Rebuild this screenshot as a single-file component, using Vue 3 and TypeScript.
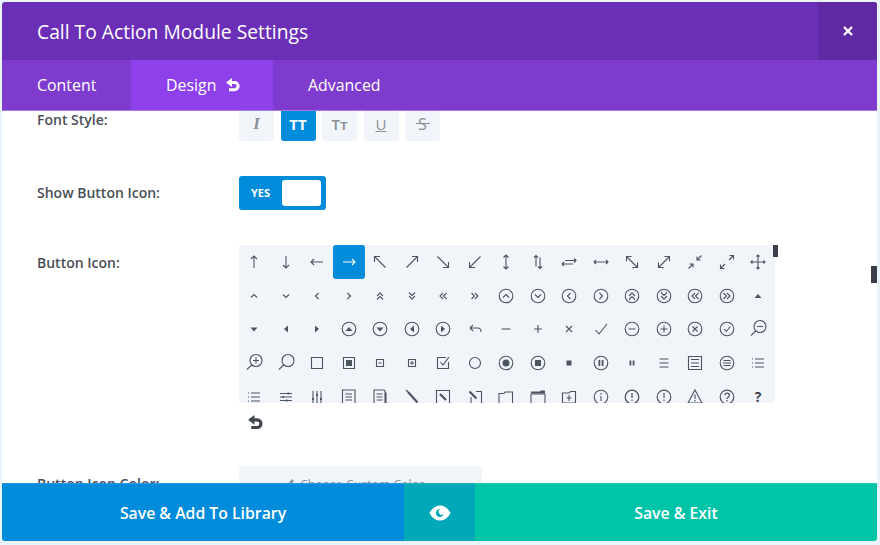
<script setup lang="ts">
interface Glyph { s?: string; f?: string; t?: string; w?: number; b?: string }

const ring = 'M18.8 12a6.8 6.8 0 1 1-13.6 0 6.8 6.8 0 1 1 13.6 0'
const triU = 'M8.5 14 12 10l3.5 4z'
const triD = 'M8.5 10.5 12 14.5l3.5-4z'
const triL = 'M14 8.5 10 12l4 3.5z'
const triR = 'M10 8.5 14 12l-4 3.5z'
const chevU = 'M9 13.5l3-3 3 3'
const chevD = 'M9 10.5l3 3 3-3'
const chevL = 'M13.5 9l-3 3 3 3'
const chevR = 'M10.5 9l3 3-3 3'
const dblU = 'M9 12l3-3 3 3M9 15.5l3-3 3 3'
const dblD = 'M9 8.5l3 3 3-3M9 12l3 3 3-3'
const dblL = 'M12 9l-3 3 3 3M15.5 9l-3 3 3 3'
const dblR = 'M8.5 9l3 3-3 3M12 9l3 3-3 3'
const lens = 'M20 9.5a6 6 0 1 1-12 0 6 6 0 1 1 12 0M9.7 13.8 5 18.5'
const lines3 = 'M8 8.5h8M8 12h8M8 15.5h8'
const listDots = 'M9 8h9M9 12h9M9 16h9M6 8h1M6 12h1M6 16h1'

const icons: Glyph[] = [
  { s: 'M12 6v12M9 9l3-3 3 3' },
  { s: 'M12 6v12M9 15l3 3 3-3' },
  { s: 'M6 12h12M9 9l-3 3 3 3' },
  { s: 'M6 12h12M15 9l3 3-3 3' },
  { s: 'M6.500 6.500l11 11M6.500 12V6.500H12' },
  { s: 'M17.500 6.500l-11 11M12 6.500h5.500V12' },
  { s: 'M6.500 6.500l11 11M12 17.500h5.500V12' },
  { s: 'M17.500 6.500l-11 11M12 17.500H6.500V12' },
  { s: 'M12 5v14M9.500 7.500 12 5l2.500 2.500M9.500 16.500 12 19l2.500-2.500' },
  { s: 'M10 5.500v11M8 7.500l2-2 2 2M14 7.500v11M12 16.500l2 2 2-2' },
  { s: 'M5 14h11M7 12l-2 2 2 2M8 10.500h11M17 8.500l2 2-2 2' },
  { s: 'M5 12h14M7 10l-2 2 2 2M17 10l2 2-2 2' },
  { s: 'M6.500 6.500l11 11M6.500 11.500v-5h5M17.500 12.500v5h-5' },
  { s: 'M17.500 6.500l-11 11M12.500 6.500h5v5M6.500 12.500v5h5' },
  { s: 'M18.500 5.500 14 10M14 6.500V10h3.500M5.500 18.500 10 14M6.500 14H10v3.500' },
  { s: 'M14 10l4.500-4.500M14.500 5.500h4v4M10 14l-4.500 4.500M5.500 14.500v4h4' },
  { s: 'M12 5v14M5 12h14M10.500 6.500 12 5l1.500 1.500M10.500 17.500 12 19l1.500-1.500M6.500 10.500 5 12l1.500 1.500M17.500 10.500 19 12l-1.500 1.500' },

  { s: chevU }, { s: chevD }, { s: chevL }, { s: chevR },
  { s: dblU }, { s: dblD }, { s: dblL }, { s: dblR },
  { s: ring + chevU }, { s: ring + chevD }, { s: ring + chevL }, { s: ring + chevR },
  { s: ring + dblU }, { s: ring + dblD }, { s: ring + dblL }, { s: ring + dblR },
  { f: triU },

  { f: triD }, { f: triL }, { f: triR },
  { s: ring, f: triU }, { s: ring, f: triD }, { s: ring, f: triL }, { s: ring, f: triR },
  { s: 'M7 11h8c2 0 3 1.500 3 4M10 8l-3 3 3 3' },
  { s: 'M7.500 12h9' },
  { s: 'M12 8v8M8 12h8' },
  { s: 'M9 9l6 6M15 9l-6 6' },
  { s: 'M6.500 13l3.500 4 8-10' },
  { s: ring + 'M8.500 12h7' },
  { s: ring + 'M8.500 12h7M12 8.500v7' },
  { s: ring + 'M9.500 9.500l5 5M14.500 9.500l-5 5' },
  { s: ring + 'M9 12l2.300 2.500L15.500 9.500' },
  { s: lens + 'M11 9.500h6' },

  { s: lens + 'M11 9.500h6M14 6.500v6' },
  { s: lens },
  { s: 'M6.500 6.500h11v11h-11z' },
  { s: 'M6.500 6.500h11v11h-11z', f: 'M9 9h6v6H9z' },
  { s: 'M8.500 8.500h7v7h-7zM10.500 12h3' },
  { s: 'M8.500 8.500h7v7h-7zM10 12h4M12 10v4' },
  { s: 'M17.500 11v6.500h-11v-11H15M9.500 11l2.500 3 6-8' },
  { s: 'M17.500 12a5.500 5.500 0 1 1-11 0 5.500 5.500 0 1 1 11 0' },
  { s: ring, f: 'M15.500 12a3.500 3.500 0 1 1-7 0 3.500 3.500 0 1 1 7 0' },
  { s: ring, f: 'M9 9h6v6H9z' },
  { f: 'M9.500 9.500h5v5h-5z' },
  { s: ring, f: 'M9.500 9h1.800v6H9.500zM12.700 9h1.800v6h-1.800z' },
  { f: 'M9.500 9.500h1.800v5H9.500zM12.700 9.500h1.800v5h-1.800z' },
  { s: 'M7.500 8h9M7.500 12h9M7.500 16h9' },
  { s: 'M5.500 5.500h13v13h-13z' + lines3 },
  { s: ring + 'M8.500 9.500h7M8 12h8M8.500 14.500h7' },
  { s: listDots },

  { s: listDots },
  { s: 'M6 8.500h12M6 12h12M6 15.500h12', f: 'M13.500 7.500h1.500v2h-1.500zM8.500 11h1.500v2H8.500zM12 14.500h1.500v2H12z' },
  { s: 'M8 6v12M12 6v12M16 6v12', f: 'M7 13h2v2H7zM11 9h2v2h-2zM15 13h2v2h-2z' },
  { s: 'M5.500 5h12.500v15H5.500zM8.500 9h6.500M8.500 12h6.500M8.500 15h6.500' },
  { s: 'M16 5H6v15h11V6zM8.500 9h6M8.500 12h6M8.500 15h6M18 7.500V21H9' },
  { s: 'M6 5l2 2', b: 'M8 7l9.500 10.500' },
  { s: 'M5.500 5.500h13v13h-13z', b: 'M9 9l6 6' },
  { s: 'M13 6.500h5.500v12.500H8V12', b: 'M6.500 6.500l7 7' },
  { s: 'M5 8.500h5l1-1.500h7.500v11.500H5z' },
  { s: 'M5 9h14v9.500H5z', f: 'M5 6.500h9l.5-1H19v3H5z' },
  { s: 'M5.500 8h6.500l1.500-1.500h5v11.500h-13zM12 10v6M9.500 13h5' },
  { s: ring + 'M12 11v5M12 8v1.500' },
  { s: ring + 'M12 8v5M12 14.500V16', w: 1.300 },
  { s: ring + 'M12 8v5M12 14.500V16', w: 1.200 },
  { s: 'M12 5 19 18H5zM12 9.500V14M12 15v1.500', w: 1.100 },
  { s: ring + 'M9.800 10.300c0-3 4.600-3 4.600 0 0 2-2.400 1.900-2.400 3.800M12 15v1.500', w: 1.200 },
  { t: '?' },
]

const fontStyles = [
  { label: 'I', cls: 'italic' },
  { label: 'TT', cls: 'on' },
  { label: 'Tт', cls: 'caps' },
  { label: 'U', cls: 'under' },
  { label: 'S', cls: 'strike' },
]
</script>

<template>
  <div class="modal">
    <header class="head">
      <h1 class="title">Call To Action Module Settings</h1>
      <button class="close" aria-label="Close">
        <svg width="12" height="12" viewBox="0 0 12 12"><path d="M2 2l8 8M10 2l-8 8" stroke="#fff" stroke-width="2.400" fill="none" /></svg>
      </button>
    </header>

    <nav class="tabs">
      <div class="tab first">Content</div>
      <div class="tab active">
        Design
        <svg class="undo" width="16" height="16" viewBox="0 0 16 16"><path d="M5 5.500h4.500a3.600 3.600 0 0 1 0 7.200H4" stroke="currentColor" stroke-width="3" fill="none" /><path d="M7 1v9L1 5.500z" fill="currentColor" /></svg>
      </div>
      <div class="tab">Advanced</div>
    </nav>

    <main class="body">
      <div class="row first-row">
        <label class="lab">Font Style:</label>
        <div class="styles">
          <span v-for="b in fontStyles" :key="b.label" class="style-btn" :class="b.cls">{{ b.label }}</span>
        </div>
      </div>

      <div class="row toggle-row">
        <label class="lab">Show Button Icon:</label>
        <div class="toggle"><span class="yes">YES</span><span class="thumb"></span></div>
      </div>

      <div class="row icon-row">
        <label class="lab">Button Icon:</label>
        <div class="icon-col">
          <div class="grid-wrap">
            <div class="grid">
              <div v-for="(g, i) in icons" :key="i" class="cell" :class="{ sel: i === 3 }">
                <svg width="24" height="24" viewBox="0 0 24 24">
                  <path v-if="g.s" :d="g.s" fill="none" stroke="currentColor" :stroke-width="g.w || 1.100" />
                  <path v-if="g.b" :d="g.b" fill="none" stroke="currentColor" stroke-width="2.200" />
                  <path v-if="g.f" :d="g.f" fill="currentColor" />
                  <text v-if="g.t" x="12" y="17" text-anchor="middle" class="q">{{ g.t }}</text>
                </svg>
              </div>
            </div>
            <span class="thumb-inner"></span>
          </div>
          <svg class="undo-dark" width="17" height="17" viewBox="0 0 16 16"><path d="M5 5.500h4.500a3.600 3.600 0 0 1 0 7.200H4" stroke="currentColor" stroke-width="3" fill="none" /><path d="M7 1v9L1 5.500z" fill="currentColor" /></svg>
        </div>
      </div>

      <div class="row color-row">
        <label class="lab">Button Icon Color:</label>
        <div class="color-btn">
          <svg width="10" height="12" viewBox="0 0 10 12"><path d="M7 1 9 3 3 10H1V8z" fill="currentColor" /></svg>
          Choose Custom Color
        </div>
      </div>

      <span class="thumb-outer"></span>
    </main>

    <footer class="foot">
      <div class="fbtn lib">Save &amp; Add To Library</div>
      <div class="fbtn eye">
        <svg width="22" height="16" viewBox="0 0 22 16"><path fill-rule="evenodd" d="M0.500 8C3 3 7 .5 11 .5S19 3 21.500 8C19 13 15 15.500 11 15.500S3 13 .5 8zM11 4a4 4 0 1 0 3.800 5.200A3 3 0 0 1 11 4z" fill="#fff" /></svg>
      </div>
      <div class="fbtn exit">Save &amp; Exit</div>
    </footer>
  </div>
</template>

<style>
html, body { margin: 0; background: #e9f5fb; }
</style>

<style scoped>
* { box-sizing: border-box; }
.modal {
  width: 875px;
  height: 539px;
  margin: 2px 3px 4px 2px;
  display: flex;
  flex-direction: column;
  border-radius: 3px;
  overflow: hidden;
  background: #fff;
  font-family: "Open Sans", "Noto Sans", sans-serif;
}
.head {
  height: 58px;
  flex: none;
  display: flex;
  align-items: center;
  justify-content: space-between;
  background: #6b2eb6;
}
.title {
  margin: 0 0 0 35px;
  font-size: 19.300px;
  font-weight: 400;
  color: #fff;
}
.close {
  width: 59px;
  height: 58px;
  border: 0;
  padding: 0;
  background: #5f29a3;
  display: flex;
  align-items: center;
  justify-content: center;
}
.tabs {
  height: 51px;
  flex: none;
  display: flex;
  background: #7e3bce;
  border-bottom: 1px solid #a67be0;
  color: #fff;
  font-size: 15.900px;
}
.tab {
  display: flex;
  align-items: center;
  padding: 0 35px;
}
.tab.first { width: 129px; }
.tab.active {
  width: 142px;
  background: #8e41ea;
  gap: 9px;
}
.undo { flex: none; }
.body {
  flex: 1;
  min-height: 0;
  overflow: hidden;
  position: relative;
  color: #4c5866;
}
.row {
  display: flex;
  padding-left: 35px;
}
.lab {
  width: 202px;
  flex: none;
  font-size: 14px;
  font-weight: 600;
  color: #4a4f57;
}
.first-row { height: 30px; }
.first-row .lab { line-height: 18px; }
.styles { display: flex; gap: 6.500px; }
.style-btn {
  position: relative;
  width: 35px;
  height: 30px;
  border-radius: 0 0 3px 3px;
  background: #f1f5f9;
  color: #87909a;
  display: flex;
  align-items: center;
  justify-content: center;
  font-size: 15px;
  font-weight: 600;
  padding-bottom: 4px;
}
.style-btn.on { background: #008bdb; color: #fff; font-size: 15px; font-weight: 700; }
.style-btn.italic { font-style: italic; font-family: "Liberation Serif", serif; font-size: 17px; font-weight: 700; }
.style-btn.under { text-decoration: underline; font-weight: 400; }
.style-btn.strike { font-weight: 400; font-size: 16px; }
.style-btn.strike::after {
  content: "";
  position: absolute;
  left: 11px;
  top: 12px;
  width: 14px;
  height: 1px;
  background: #87909a;
}
.toggle-row { margin-top: 35px; }
.toggle-row .lab { line-height: 34px; }
.toggle {
  width: 87px;
  height: 34px;
  border-radius: 3px;
  background: #008bdb;
  padding: 4px 5px 4px 12px;
  display: flex;
  align-items: center;
  justify-content: space-between;
}
.yes { color: #fff; font-size: 11px; font-weight: 700; padding-bottom: 2px; }
.thumb { width: 39px; height: 26px; background: #fff; border-radius: 3px; }
.icon-row { margin-top: 35px; }
.icon-row .lab { line-height: 36px; }
.icon-col { display: flex; flex-direction: column; }
.grid-wrap { position: relative; margin-left: -0.400px; }
.grid {
  width: 536px;
  height: 158px;
  overflow: hidden;
  display: grid;
  grid-template-columns: repeat(17, 31.500px);
  grid-auto-rows: 33.700px;
  background: #f1f5f9;
  border-radius: 3px;
  color: #4c5462;
}
.cell {
  display: flex;
  align-items: center;
  justify-content: center;
  border-radius: 3px;
}
.cell.sel { background: #008bdb; color: #fff; }
.q { font-size: 14px; font-weight: 700; fill: #3a404c; font-family: "Open Sans", sans-serif; }
.thumb-inner {
  position: absolute;
  left: 534px;
  top: 0;
  width: 5px;
  height: 12px;
  background: #3a3f4b;
}
.undo-dark { margin: 11px 0 0 8px; color: #3f444d; }
.color-row { margin-top: 35px; }
.color-row .lab { line-height: 36px; }
.color-btn {
  width: 243px;
  height: 36px;
  border-radius: 3px;
  background: #f1f5f9;
  color: #8e959e;
  font-size: 12.300px;
  font-weight: 400;
  display: flex;
  align-items: center;
  justify-content: center;
  gap: 5px;
  padding-right: 12px;
}
.thumb-outer {
  position: absolute;
  right: 0;
  top: 155px;
  width: 6px;
  height: 17px;
  background: #3a3f4b;
}
.foot {
  height: 58px;
  flex: none;
  display: flex;
  position: relative;
  color: #fff;
  font-size: 15.800px;
  font-weight: 600;
}
.fbtn { display: flex; align-items: center; justify-content: center; }
.lib { width: 402px; background: #008bdb; border-top: 1px solid #1a97e0; }
.eye { width: 71px; background: #00a8b8; border-top: 1px solid #1ab1bf; }
.exit { width: 402px; background: #00c4a8; border-top: 1px solid #1acab1; }
</style>
